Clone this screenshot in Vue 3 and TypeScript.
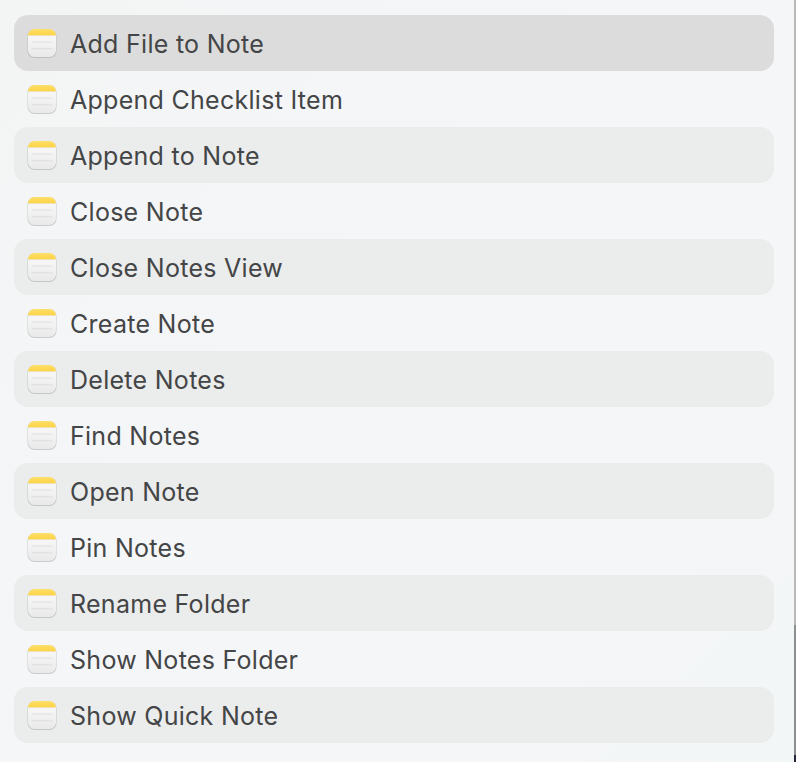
<script setup lang="ts">
const actions = [
  'Add File to Note',
  'Append Checklist Item',
  'Append to Note',
  'Close Note',
  'Close Notes View',
  'Create Note',
  'Delete Notes',
  'Find Notes',
  'Open Note',
  'Pin Notes',
  'Rename Folder',
  'Show Notes Folder',
  'Show Quick Note',
]
</script>

<template>
  <div class="window">
    <ul class="list">
      <li
        v-for="(name, i) in actions"
        :key="name"
        class="row"
        :class="{ selected: i === 0, striped: i > 0 && i % 2 === 0 }"
      >
        <svg class="icon" width="32" height="32" viewBox="0 0 32 32">
          <defs>
            <linearGradient id="paper" x1="0" y1="0" x2="0" y2="1">
              <stop offset="0" stop-color="#fcfcfc" />
              <stop offset="1" stop-color="#e9e9e9" />
            </linearGradient>
            <linearGradient id="band" x1="0" y1="0" x2="0" y2="1">
              <stop offset="0" stop-color="#fedf6a" />
              <stop offset="1" stop-color="#fdd344" />
            </linearGradient>
            <clipPath id="squircle">
              <rect x="2" y="2" width="28" height="28" rx="6.5" />
            </clipPath>
          </defs>
          <rect x="1.5" y="2" width="29" height="29" rx="7" fill="#a9a9a9" opacity="0.55" />
          <g clip-path="url(#squircle)">
            <rect x="2" y="2" width="28" height="28" fill="url(#paper)" />
            <rect x="2" y="2" width="28" height="6.5" fill="url(#band)" />
            <rect x="2" y="8.5" width="28" height="0.6" fill="#e4dfc8" />
            <rect x="5.5" y="14.6" width="21" height="1" fill="#e0e0e0" />
            <rect x="5.5" y="21.3" width="21" height="1" fill="#dedede" />
          </g>
        </svg>
        <span class="name">{{ name }}</span>
      </li>
    </ul>
    <div class="edge">
      <span class="edge-top"></span>
      <span class="edge-mid"></span>
      <span class="edge-bottom"></span>
    </div>
  </div>
</template>

<style>
html,
body {
  margin: 0;
  overflow: hidden;
}
</style>

<style scoped>
.window {
  display: flex;
  width: 796px;
  height: 762px;
  background: linear-gradient(135deg, #f3f5f5 0%, #f5f6f8 50%, #f3f6f6 100%);
  font-family: Inter, "Liberation Sans", sans-serif;
}

.list {
  flex: 1;
  list-style: none;
  margin: 0;
  padding: 15px 20px 0 14px;
}

.row {
  display: flex;
  align-items: center;
  gap: 12px;
  height: 56px;
  padding-left: 12px;
  border-radius: 14px;
  box-sizing: border-box;
  color: #444546;
  font-size: 25px;
  letter-spacing: 0.28px;
}

.row.selected {
  background: #dcdcdc;
}

.row.striped {
  background: #ebecec;
}

.icon {
  flex: none;
}

.name {
  padding-top: 2px;
}

.edge {
  display: flex;
  flex-direction: column;
  width: 2px;
}

.edge-top {
  height: 625px;
  background: #b8b8b8;
}

.edge-mid {
  height: 130px;
  background: #8d8e90;
}

.edge-bottom {
  flex: 1;
  background: #24263a;
}
</style>
